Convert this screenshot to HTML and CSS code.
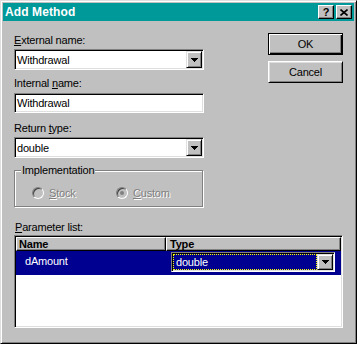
FILE: index.html
```html
<!DOCTYPE html>
<html lang="en">
<head>
<meta charset="UTF-8">
<title>Add Method</title>
<link rel="stylesheet" href="styles.css">
</head>
<body>
<div class="window">
    <div class="titlebar">
        <span class="title">Add Method</span>
        <div class="caption-btns">
            <span class="cap-btn cap-help">?</span>
            <span class="cap-btn">
                <svg width="8" height="7" viewBox="0 0 8 7"><path d="M0.5 0.5L7.5 6.5M7.5 0.5L0.5 6.5" stroke="#000" stroke-width="1.6"/></svg>
            </span>
        </div>
    </div>
    <div class="content">
        <div class="top">
            <div class="fields">
                <div class="label lbl-first"><u>E</u>xternal name:</div>
                <div class="combo">
                    <span class="combo-text">Withdrawal</span>
                    <span class="drop-btn"><svg width="7" height="4" viewBox="0 0 7 4"><path d="M0 0H7L3.5 4Z" fill="#000"/></svg></span>
                </div>
                <div class="label lbl-second">Internal <u>n</u>ame:</div>
                <div class="textbox">Withdrawal</div>
                <div class="label lbl-third">Return <u>t</u>ype:</div>
                <div class="combo">
                    <span class="combo-text">double</span>
                    <span class="drop-btn"><svg width="7" height="4" viewBox="0 0 7 4"><path d="M0 0H7L3.5 4Z" fill="#000"/></svg></span>
                </div>
                <fieldset class="group">
                    <legend>Implementation</legend>
                    <div class="radios">
                        <span class="radio disabled"><span class="radio-circle"></span><span class="radio-text"><u>S</u>tock</span></span>
                        <span class="radio disabled"><span class="radio-circle checked"></span><span class="radio-text"><u>C</u>ustom</span></span>
                    </div>
                </fieldset>
            </div>
            <div class="buttons">
                <div class="btn btn-default">OK</div>
                <div class="btn">Cancel</div>
            </div>
        </div>
        <div class="label lbl-params"><u>P</u>arameter list:</div>
        <div class="list">
            <div class="list-header">
                <div class="hcell hname">Name</div>
                <div class="hcell htype">Type</div>
            </div>
            <div class="list-row selected">
                <div class="cell-name">dAmount</div>
                <div class="cell-type">
                    <div class="combo combo-row">
                        <span class="combo-edit">double</span>
                        <span class="drop-btn"><svg width="7" height="4" viewBox="0 0 7 4"><path d="M0 0H7L3.5 4Z" fill="#000"/></svg></span>
                    </div>
                </div>
            </div>
        </div>
    </div>
</div>
</body>
</html>
```

FILE: styles.css
```css
body {
    margin: 0;
    font-family: "Liberation Sans", Arial, sans-serif;
    font-size: 11px;
    letter-spacing: -0.2px;
    color: #000;
}
.window {
    width: 357px;
    height: 344px;
    box-sizing: border-box;
    background-color: #c0c0c0;
    border: 1px solid;
    border-color: #dfdfdf #000 #000 #dfdfdf;
    box-shadow: inset 1px 1px #fff, inset -1px -1px #808080;
    padding: 2px;
}
.titlebar {
    height: 18px;
    background-color: #009999;
    display: flex;
    align-items: center;
    justify-content: space-between;
    padding: 0 2px;
}
.title {
    color: #fff;
    font-weight: bold;
    font-size: 12px;
    letter-spacing: 0.1px;
}
.caption-btns {
    display: flex;
    gap: 2px;
}
.cap-btn {
    width: 16px;
    height: 14px;
    box-sizing: border-box;
    background-color: #c0c0c0;
    border: 1px solid;
    border-color: #fff #000 #000 #fff;
    box-shadow: inset -1px -1px #808080;
    display: flex;
    align-items: center;
    justify-content: center;
}
.cap-help {
    font-weight: bold;
    font-size: 11px;
    line-height: 12px;
}
.content {
    padding: 0 11px;
}
.top {
    display: flex;
    justify-content: space-between;
}
.fields {
    width: 190px;
}
.label {
    height: 13px;
    line-height: 13px;
}
.lbl-first { margin-top: 13px; margin-bottom: 2px; }
.lbl-second { margin-top: 7px; margin-bottom: 3px; }
.lbl-third { margin-top: 9px; margin-bottom: 2px; }
.lbl-params { margin-top: 14px; margin-bottom: 1px; padding-left: 1px; }
.combo, .textbox, .list {
    box-sizing: border-box;
    background-color: #fff;
    border: 1px solid;
    border-color: #808080 #fff #fff #808080;
    box-shadow: inset 1px 1px #000, inset -1px -1px #dfdfdf;
    padding: 1px;
}
.combo {
    height: 21px;
    display: flex;
    align-items: center;
}
.combo-text {
    flex: 1;
    padding-left: 1px;
}
.textbox {
    height: 20px;
    line-height: 16px;
    padding-left: 2px;
}
.drop-btn {
    width: 16px;
    height: 17px;
    box-sizing: border-box;
    background-color: #c0c0c0;
    border: 1px solid;
    border-color: #dfdfdf #000 #000 #dfdfdf;
    box-shadow: inset 1px 1px #fff, inset -1px -1px #808080;
    display: flex;
    align-items: center;
    justify-content: center;
}
.drop-btn svg {
    shape-rendering: crispEdges;
}
.group {
    margin: 6px 0 0 0;
    padding: 9px 0 7px 0;
    min-width: 0;
    width: 189px;
    box-sizing: border-box;
    border: 1px solid #808080;
    box-shadow: inset 1px 1px #fff, 1px 1px #fff;
}
.group legend {
    padding: 0 1px;
    margin-left: 6px;
    line-height: 13px;
    background-color: #c0c0c0;
}
.radios {
    display: flex;
    height: 13px;
    align-items: center;
    padding-left: 17px;
}
.radio {
    width: 84px;
    display: flex;
    align-items: center;
}
.radio-circle {
    width: 12px;
    height: 12px;
    box-sizing: border-box;
    border-radius: 50%;
    border: 1px solid;
    border-color: #808080 #fff #fff #808080;
    box-shadow: inset 1px 1px #404040;
    background-color: #c0c0c0;
    margin-right: 5px;
    display: flex;
    align-items: center;
    justify-content: center;
}
.radio-circle.checked::after {
    content: "";
    width: 4px;
    height: 4px;
    border-radius: 50%;
    background-color: #808080;
}
.disabled .radio-text {
    color: #808080;
    text-shadow: 1px 1px #fff;
}
.buttons {
    width: 75px;
    padding-top: 12px;
    display: flex;
    flex-direction: column;
    gap: 6px;
}
.btn {
    height: 22px;
    box-sizing: border-box;
    border: 1px solid;
    border-color: #fff #000 #000 #fff;
    box-shadow: inset 1px 1px #dfdfdf, inset -1px -1px #808080;
    display: flex;
    align-items: center;
    justify-content: center;
}
.btn-default {
    border-color: #000;
    box-shadow: inset 1px 1px #fff, inset -1px -1px #000, inset -2px -2px #808080;
}
.list {
    margin-top: 1px;
    height: 93px;
}
.list-header {
    display: flex;
    height: 14px;
}
.hcell {
    box-sizing: border-box;
    height: 14px;
    line-height: 12px;
    font-weight: bold;
    background-color: #c0c0c0;
    border: 1px solid;
    border-color: #fff #000 #000 #fff;
    box-shadow: inset -1px -1px #808080;
}
.hname {
    width: 150px;
    padding-left: 2px;
}
.htype {
    flex: 1;
    padding-left: 3px;
}
.list-row {
    display: flex;
    height: 24px;
}
.selected {
    background-color: #000090;
    color: #fff;
}
.cell-name {
    width: 150px;
    padding: 4px 0 0 9px;
    line-height: 13px;
    box-sizing: border-box;
}
.cell-type {
    flex: 1;
    padding: 1px 6px 0 5px;
}
.combo-row {
    height: 20px;
    background-color: #c0c0c0;
    color: #fff;
}
.combo-edit {
    flex: 1;
    height: 16px;
    box-sizing: border-box;
    background-color: #000090;
    border: 1px dotted #ffff00;
    line-height: 14px;
    padding-left: 2px;
}
.combo-row .drop-btn {
    height: 16px;
}
```
